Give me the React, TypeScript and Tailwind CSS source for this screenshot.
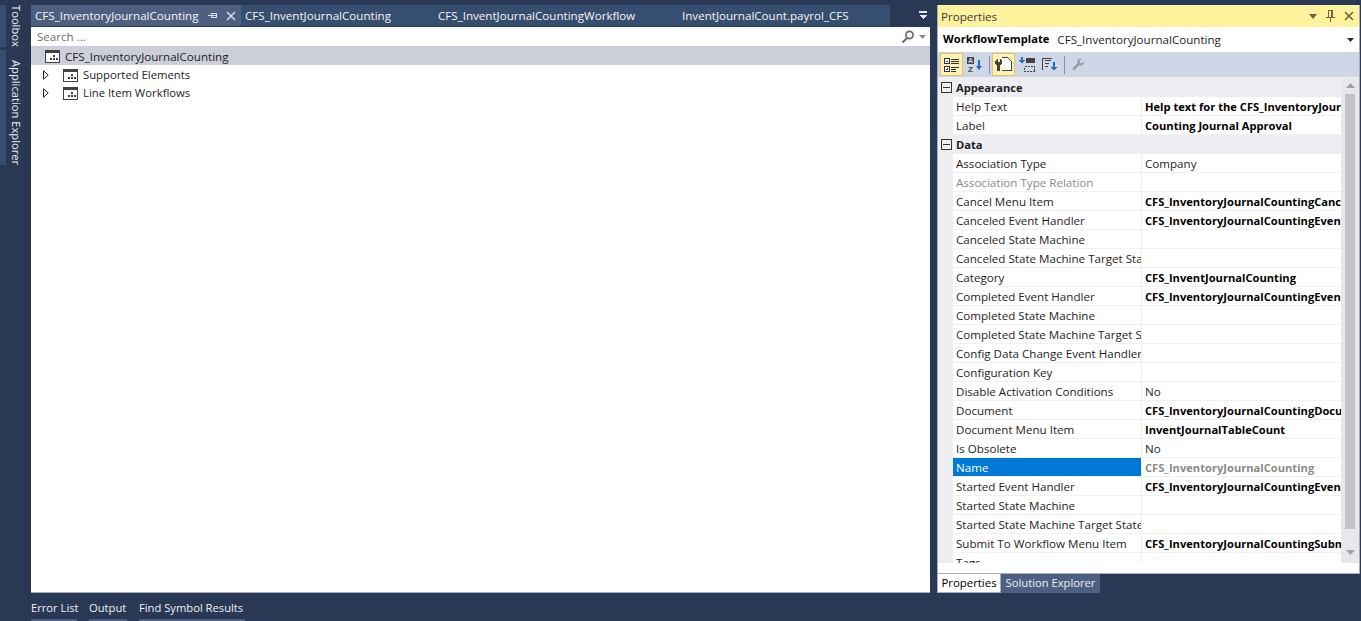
import React from 'react';

type Prop = { label: string; value?: string; bold?: boolean; dim?: boolean; selected?: boolean };

const APPEARANCE: Prop[] = [
  { label: 'Help Text', value: 'Help text for the CFS_InventoryJournalCounting', bold: true },
  { label: 'Label', value: 'Counting Journal Approval', bold: true },
];

const DATA: Prop[] = [
  { label: 'Association Type', value: 'Company' },
  { label: 'Association Type Relation', dim: true },
  { label: 'Cancel Menu Item', value: 'CFS_InventoryJournalCountingCancelMenuItem', bold: true },
  { label: 'Canceled Event Handler', value: 'CFS_InventoryJournalCountingEventHandler', bold: true },
  { label: 'Canceled State Machine' },
  { label: 'Canceled State Machine Target State' },
  { label: 'Category', value: 'CFS_InventJournalCounting', bold: true },
  { label: 'Completed Event Handler', value: 'CFS_InventoryJournalCountingEventHandler', bold: true },
  { label: 'Completed State Machine' },
  { label: 'Completed State Machine Target State' },
  { label: 'Config Data Change Event Handler' },
  { label: 'Configuration Key' },
  { label: 'Disable Activation Conditions', value: 'No' },
  { label: 'Document', value: 'CFS_InventoryJournalCountingDocument', bold: true },
  { label: 'Document Menu Item', value: 'InventJournalTableCount', bold: true },
  { label: 'Is Obsolete', value: 'No' },
  { label: 'Name', value: 'CFS_InventoryJournalCounting', bold: true, dim: true, selected: true },
  { label: 'Started Event Handler', value: 'CFS_InventoryJournalCountingEventHandler', bold: true },
  { label: 'Started State Machine' },
  { label: 'Started State Machine Target State' },
  { label: 'Submit To Workflow Menu Item', value: 'CFS_InventoryJournalCountingSubmitMenuItem', bold: true },
  { label: 'Tags' },
];

const BOTTOM_TABS = [
  { text: 'Error List', width: 'w-[46px]' },
  { text: 'Output', width: 'w-[38px]' },
  { text: 'Find Symbol Results', width: 'w-[106px]' },
];

const TreeIcon = () => (
  <svg width="15" height="13" viewBox="0 0 15 13" shapeRendering="crispEdges" className="shrink-0">
    <rect x="0.5" y="0.5" width="14" height="12" fill="#fff" stroke="#424242" />
    <rect x="1" y="1" width="13" height="2" fill="#424242" />
    <rect x="5" y="8" width="2" height="2" fill="#424242" />
    <rect x="8" y="8" width="2" height="2" fill="#424242" />
    <rect x="11" y="8" width="2" height="2" fill="#424242" />
    <rect x="8" y="5" width="2" height="2" fill="#424242" />
  </svg>
);

const Expander = () => (
  <svg width="6" height="10" viewBox="0 0 6 10" className="shrink-0">
    <path d="M0.5 0.8 L5.2 5 L0.5 9.2 Z" fill="#fff" stroke="#1e1e1e" />
  </svg>
);

const Minus = () => (
  <svg width="11" height="11" viewBox="0 0 11 11" shapeRendering="crispEdges">
    <rect x="0.5" y="0.5" width="10" height="10" fill="none" stroke="#333" />
    <rect x="2" y="5" width="7" height="1" fill="#333" />
  </svg>
);

const TreeRow = ({ text }: { text: string }) => (
  <div className="flex h-[18px] items-center pl-[12px]">
    <Expander />
    <div className="ml-[14px] mr-[5px] flex"><TreeIcon /></div>
    <span className="text-[11.3px]">{text}</span>
  </div>
);

const PropRow = ({ p }: { p: Prop }) => (
  <div className="flex h-[19px] shrink-0">
    <div
      className={`w-[188px] pl-[3px] leading-[20px] whitespace-nowrap overflow-hidden border-b border-[#f0f0f5] ${
        p.selected ? 'bg-[#0078d7] text-white' : p.dim ? 'bg-white text-[#8a8a8a]' : 'bg-white text-[#1e1e1e]'
      }`}
    >
      {p.label}
    </div>
    <div
      className={`ml-px flex-1 min-w-0 pl-[3px] leading-[20px] whitespace-nowrap overflow-hidden bg-white border-b border-[#f0f0f5] ${
        p.bold ? 'font-bold text-[11.15px]' : ''
      } ${p.dim ? 'text-[#8a8a8a]' : p.bold ? 'text-black' : 'text-[#1e1e1e]'}`}
    >
      {p.value}
    </div>
  </div>
);

const Category = ({ name }: { name: string }) => (
  <div className="flex h-[19px] shrink-0 items-center pl-[3px] text-[11.15px] font-bold text-[#1e1e1e]">
    <Minus />
    <span className="ml-[4px] pt-px">{name}</span>
  </div>
);

const Sep = () => <div className="ml-[3px] mr-[2px] h-[18px] w-px bg-[#8a93a6]" />;

const ToolBtn = ({ active, children }: { active?: boolean; children: React.ReactNode }) => (
  <div
    className={`flex h-[23px] w-[23px] items-center justify-center ${
      active ? 'bg-[#fff0b8] border border-[#e5c365]' : ''
    }`}
  >
    {children}
  </div>
);

export default function App() {
  return (
    <div className="flex h-screen w-full flex-col overflow-hidden bg-[#293955] pt-[5px] font-['Open_Sans',sans-serif] text-[11.6px] text-[#1e1e1e]">
      <div className="flex min-h-0 flex-1">
        {/* left rail */}
        <div className="flex w-[31px] shrink-0 flex-col text-[11.2px] leading-[14px] text-[#f0f0f0]">
          <div className="flex h-[42px] border-l-[6px] border-[#364e6f] pr-[8px] whitespace-nowrap [writing-mode:vertical-rl]">Toolbox</div>
          <div className="mt-[3px] flex h-[115px] border-l-[6px] border-[#364e6f] pr-[8px] pt-[10px] whitespace-nowrap [writing-mode:vertical-rl]">
            Application Explorer
          </div>
        </div>

        {/* document */}
        <div className="flex w-[899px] shrink-0 flex-col">
          <div className="flex h-[21px] items-stretch bg-[#364e6f] text-[#f5f5f5]">
            <div className="flex w-[210px] items-center bg-[#4d6082] pl-[4px]">
              <span>CFS_InventoryJournalCounting</span>
              <svg width="9" height="9" viewBox="0 0 9 9" shapeRendering="crispEdges" className="ml-[9px]">
                <path d="M0 4.5h3M3.5 2v5M3 2.5h6M3 6.5h6M8.5 2v5M3 4.5h6" stroke="#d8dde8" fill="none" />
              </svg>
              <svg width="10" height="10" viewBox="0 0 10 10" className="ml-[9px]">
                <path d="M1 1l8 8M9 1l-8 8" stroke="#d8dde8" strokeWidth="1.5" fill="none" />
              </svg>
            </div>
            <div className="flex w-[197px] items-center pl-[4px]">CFS_InventJournalCounting</div>
            <div className="flex w-[244px] items-center">CFS_InventJournalCountingWorkflow</div>
            <div className="flex flex-1 items-center">InventJournalCount.payrol_CFS</div>
            <div className="flex w-[40px] items-center justify-end bg-[#293955] pr-[2px]">
              <svg width="10" height="9" viewBox="0 0 10 9" shapeRendering="crispEdges">
                <rect x="1" y="0" width="8" height="2" fill="#e8ecf2" />
                <path d="M1 4h8l-4 4z" fill="#e8ecf2" />
              </svg>
            </div>
          </div>
          <div className="mt-px flex h-[19px] items-center bg-white pl-[6px] pr-[4px] text-[#6d6d6d]">
            <span className="flex-1 pt-[1px]">Search ...</span>
            <svg width="14" height="14" viewBox="0 0 14 14">
              <circle cx="8.5" cy="5" r="3.6" fill="none" stroke="#6d6d6d" strokeWidth="1.7" />
              <path d="M6 8L1.5 12.5" stroke="#6d6d6d" strokeWidth="2.2" />
            </svg>
            <svg width="7" height="4" viewBox="0 0 7 4" className="ml-[4px]">
              <path d="M0 0h7L3.5 4z" fill="#8a8a8a" />
            </svg>
          </div>
          <div className="flex-1 border-b border-[#a5adbd] bg-white">
            <div className="flex h-[19px] items-center bg-[#ccced9] pl-[14px] pt-px">
              <TreeIcon />
              <span className="ml-[5px] pt-px">CFS_InventoryJournalCounting</span>
            </div>
            <div className="h-px" />
            <TreeRow text="Supported Elements" />
            <TreeRow text="Line Item Workflows" />
          </div>
        </div>

        {/* properties */}
        <div className="ml-[7px] flex w-[423px] shrink-0 flex-col">
          <div className="flex h-[569px] shrink-0 flex-col border border-t-0 border-[#a5adbd] bg-white">
            <div className="flex h-[22px] shrink-0 items-center bg-[#fff29d] pl-[3px] pr-[5px] text-[#3a3a3a]">
              <span className="flex-1 pt-[2px]">Properties</span>
              <svg width="8" height="5" viewBox="0 0 8 5" className="mr-[9px]"><path d="M0 0h8L4 5z" fill="#6b6441" /></svg>
              <svg width="9" height="12" viewBox="0 0 9 12" shapeRendering="crispEdges" className="mr-[9px]">
                <path d="M2 0.5h5M2.5 0.5v6M6.5 0.5v6M0 7.5h9M4.5 7.5v4.5M5.5 1v6" stroke="#6b6441" fill="none" />
              </svg>
              <svg width="10" height="10" viewBox="0 0 10 10"><path d="M1 1l8 8M9 1l-8 8" stroke="#6b6441" strokeWidth="1.6" fill="none" /></svg>
            </div>
            <div className="flex h-[25px] shrink-0 items-center pl-[5px] pr-[5px]">
              <span className="text-[11.15px] font-bold text-black">WorkflowTemplate</span>
              <span className="ml-[8px] flex-1">CFS_InventoryJournalCounting</span>
              <svg width="7" height="4" viewBox="0 0 7 4"><path d="M0 0h7L3.5 4z" fill="#1e2a44" /></svg>
            </div>
            <div className="flex h-[25px] shrink-0 items-center bg-[#cfd6e5] pl-[2px]">
              <ToolBtn active>
                <svg width="16" height="14" viewBox="0 0 16 14" shapeRendering="crispEdges">
                  <rect x="0.5" y="0.5" width="5" height="5" fill="#fff" stroke="#333" />
                  <rect x="0.5" y="8.5" width="5" height="5" fill="#fff" stroke="#333" />
                  <path d="M2 3h2M2 11h2M3 10v2M7 1h8M7 3h8M7 5h8M7 9h8M7 11h5M7 13h5" stroke="#333" fill="none" />
                </svg>
              </ToolBtn>
              <ToolBtn>
                <svg width="15" height="15" viewBox="0 0 15 15">
                  <rect x="0" y="0" width="7" height="7" fill="#424242" />
                  <text x="3.5" y="6" textAnchor="middle" fontSize="7" fontWeight="700" fill="#cfd6e5" fontFamily="Liberation Sans">A</text>
                  <text x="3.5" y="14.5" textAnchor="middle" fontSize="8" fontWeight="700" fill="#424242" fontFamily="Liberation Sans">Z</text>
                  <path d="M11 3h2v6h2l-3 4-3-4h2z" fill="#1b6fc0" />
                </svg>
              </ToolBtn>
              <Sep />
              <ToolBtn active>
                <svg width="17" height="15" viewBox="0 0 17 15" shapeRendering="crispEdges">
                  <path d="M6.5 0.5h6l4 4v9h-10" fill="#fff" stroke="#424242" />
                  <path d="M0 4l2-2h1v3h2V2h1l1 2v3l-2 1v6H2V8L0 7z" fill="#424242" />
                </svg>
              </ToolBtn>
              <ToolBtn>
                <svg width="16" height="15" viewBox="0 0 16 15" shapeRendering="crispEdges">
                  <rect x="7" y="1" width="9" height="5" fill="#424242" />
                  <rect x="5.5" y="9.5" width="10" height="5" fill="none" stroke="#424242" strokeDasharray="2 1" />
                  <path d="M2 0h2v3h2L3 7 0 3h2z" fill="#1b6fc0" />
                </svg>
              </ToolBtn>
              <ToolBtn>
                <svg width="16" height="15" viewBox="0 0 16 15" shapeRendering="crispEdges">
                  <path d="M0.5 13V1.5h9M3 3.5h6M3 6.5h4M3 9.5h3" stroke="#424242" fill="none" />
                  <path d="M11 5h2v5h2l-3 4-3-4h2z" fill="#1b6fc0" />
                </svg>
              </ToolBtn>
              <Sep />
              <ToolBtn>
                <svg width="13" height="13" viewBox="0 0 13 13">
                  <path d="M12 3.2a3.6 3.6 0 0 1-4.9 4L2.6 11.9a1.3 1.3 0 0 1-1.8-1.8l4.6-4.6A3.6 3.6 0 0 1 9.6 0.7L7.6 2.8l.5 2 2 .5z" fill="#9a9da6" />
                </svg>
              </ToolBtn>
            </div>
            <div className="flex h-[486px] shrink-0 overflow-hidden bg-[#eeeef2] pt-px">
              <div className="flex w-[403px] shrink-0 flex-col overflow-hidden">
                <Category name="Appearance" />
                {APPEARANCE.map(p => (
                  <div key={p.label} className="pl-[15px]"><PropRow p={p} /></div>
                ))}
                <Category name="Data" />
                {DATA.map(p => (
                  <div key={p.label} className="pl-[15px]"><PropRow p={p} /></div>
                ))}
              </div>
              <div className="flex w-[18px] shrink-0 flex-col items-center bg-[#e8e8ec]">
                <svg width="9" height="5" viewBox="0 0 9 5" className="mt-[5px]"><path d="M0 5h9L4.5 0z" fill="#9ea2aa" /></svg>
                <div className="mt-[6px] h-[435px] w-[10px] bg-[#c2c3c9]" />
                <svg width="9" height="5" viewBox="0 0 9 5" className="mt-[21px]"><path d="M0 0h9L4.5 5z" fill="#9ea2aa" /></svg>
              </div>
            </div>
          </div>
          <div className="flex h-[19px] shrink-0">
            <div className="flex w-[64px] items-center justify-center border-x border-b border-[#a5adbd] bg-white text-[11.4px] text-black">Properties</div>
            <div className="flex w-[99px] items-center justify-center bg-[#4d6082] text-[11.2px] text-[#f0f0f0]">Solution Explorer</div>
          </div>
        </div>
      </div>

      {/* bottom tabs */}
      <div className="flex h-[28px] shrink-0 gap-[12px] pl-[31px] text-[11.2px] text-[#f0f0f0]">
        {BOTTOM_TABS.map(t => (
          <div key={t.text} className={`flex flex-col justify-between whitespace-nowrap ${t.width}`}>
            <div className="pt-[6px] leading-[18px]">{t.text}</div>
            <div className="h-[2px] bg-[#4d6082]" />
          </div>
        ))}
      </div>
    </div>
  );
}
